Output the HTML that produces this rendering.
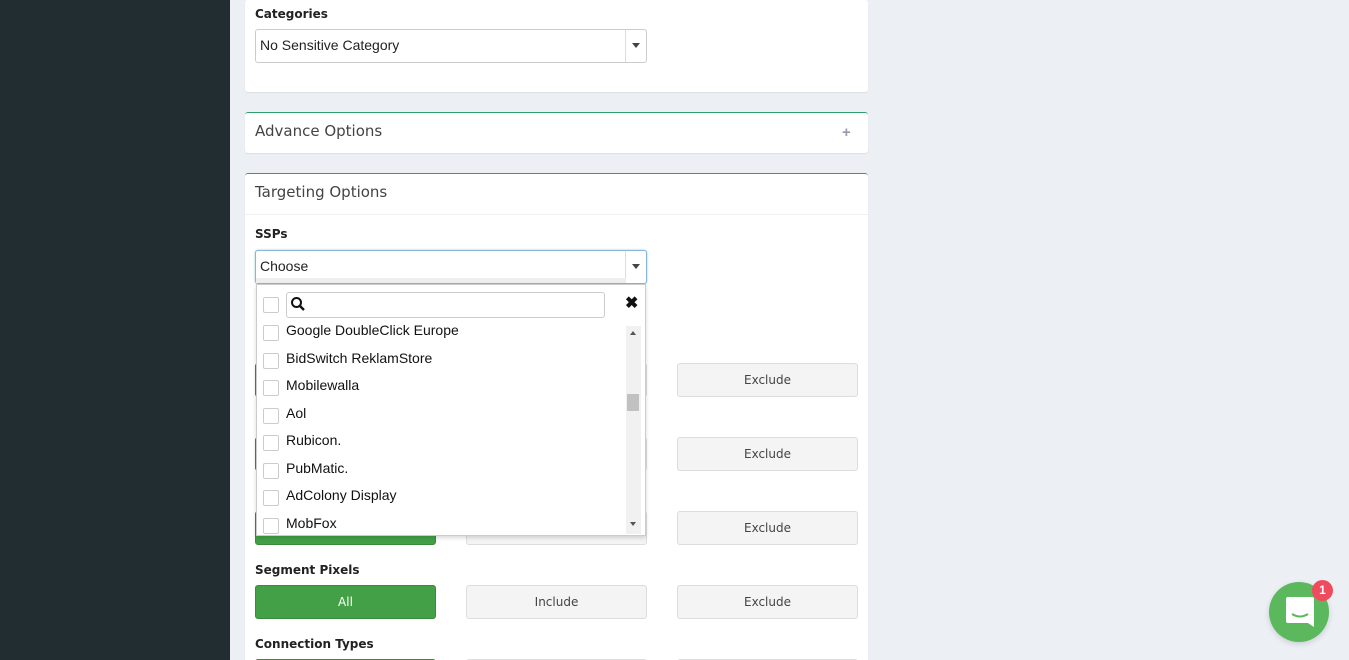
<!DOCTYPE html>
<html style="width:1349px;height:660px;overflow:hidden"><head><meta charset="utf-8"><style>
*{box-sizing:border-box;margin:0;padding:0}
body{width:1349px;height:660px;overflow:hidden;background:#ecf0f5;font-family:"Liberation Sans",sans-serif;position:relative}
.wrap{position:absolute;left:0;top:0;width:1349px;height:660px;overflow:hidden}
.a{position:absolute}
.side{left:0;top:0;width:230px;height:660px;background:#222d32}
.card{background:#fff;left:245px;width:623px;border-radius:3px;box-shadow:0 1px 1px rgba(0,0,0,.08)}
.lbl{font-family:"DejaVu Sans",sans-serif;font-weight:bold;font-size:12px;color:#222;left:255px}
.sel{left:255px;width:392px;height:34px;border:1px solid #ccc;border-radius:3px;background:#fff;font-size:14px;color:#222;padding:7px 0 0 4px}
.sel .arr{position:absolute;right:0;top:0;width:21px;height:32px;border-left:1px solid #ddd}
.sel .arr:after{content:"";position:absolute;left:6px;top:13px;border-left:4px solid transparent;border-right:4px solid transparent;border-top:5px solid #444}
.title{font-family:"DejaVu Sans",sans-serif;font-size:15px;color:#444;left:255px}
.btn{width:181px;height:34px;border:1px solid #ddd;border-radius:3px;background:#f4f4f4;font-family:"DejaVu Sans",sans-serif;font-size:12px;color:#444;text-align:center;line-height:32px}
.g{background:#43a047;border-color:#3a8a3e;color:#fff}
.cb{width:16px;height:16px;border:1px solid #ccc;border-radius:2px;background:#fff;left:263px}
.it{left:286px;font-size:14px;color:#111}
</style></head><body><div class="wrap">
<div class="a side"></div>
<div class="a card" style="top:0;height:92px"></div>
<div class="a lbl" style="top:7px">Categories</div>
<div class="a sel" style="top:29px">No Sensitive Category<div class="arr"></div></div>
<div class="a card" style="top:112px;height:41px;border-top:1px solid #2e9e6a"></div>
<div class="a title" style="top:122px">Advance Options</div>
<div class="a" style="left:842px;top:124px;font-size:15px;font-weight:bold;color:#99a">+</div>
<div class="a card" style="top:173px;height:500px;border-top:1px solid #2e9e6a"></div>
<div class="a" style="left:245px;top:214px;width:623px;height:1px;background:#f0f0f0"></div>
<div class="a title" style="top:183px">Targeting Options</div>
<div class="a lbl" style="top:227px">SSPs</div>

<div class="a btn g" style="left:255px;top:363px">All</div><div class="a btn" style="left:466px;top:363px">Include</div><div class="a btn" style="left:677px;top:363px">Exclude</div>
<div class="a btn g" style="left:255px;top:437px">All</div><div class="a btn" style="left:466px;top:437px">Include</div><div class="a btn" style="left:677px;top:437px">Exclude</div>
<div class="a btn g" style="left:255px;top:511px">All</div><div class="a btn" style="left:466px;top:511px">Include</div><div class="a btn" style="left:677px;top:511px">Exclude</div>
<div class="a lbl" style="top:563px">Segment Pixels</div>
<div class="a btn g" style="left:255px;top:585px">All</div><div class="a btn" style="left:466px;top:585px">Include</div><div class="a btn" style="left:677px;top:585px">Exclude</div>
<div class="a lbl" style="top:637px">Connection Types</div>
<div class="a btn g" style="left:255px;top:659px"></div><div class="a btn" style="left:466px;top:659px"></div><div class="a btn" style="left:677px;top:659px"></div>

<div class="a sel" style="top:250px;border-color:#8ab4d8;box-shadow:0 0 2px #9cc">Choose<div class="arr"></div></div>
<div class="a" style="left:256px;top:278px;width:370px;height:5px;background:#eee"></div>
<div class="a" style="left:256px;top:284px;width:390px;height:252px;background:#fff;border:1px solid #ccc;box-shadow:0 2px 4px rgba(0,0,0,.15)"></div>
<div class="a cb" style="top:297px"></div>
<div class="a" style="left:286px;top:292px;width:319px;height:26px;border:1px solid #ccc;border-radius:3px;background:#fff"></div>
<svg class="a" style="left:290px;top:296px" width="16" height="16" viewBox="0 0 16 16"><circle cx="6.5" cy="6.5" r="4.5" fill="none" stroke="#111" stroke-width="2"/><path d="M10 10l4 4" stroke="#111" stroke-width="2.4"/></svg>
<div class="a" style="left:625px;top:293px;font-size:16px;font-weight:bold;color:#111">✖</div>
<div class="a" style="left:626px;top:326px;width:15px;height:208px;background:#f1f1f1"></div>
<div class="a" style="left:627px;top:394px;width:12px;height:17px;background:#c1c1c1"></div>
<div class="a" style="left:630px;top:331px;border-left:3px solid transparent;border-right:3px solid transparent;border-bottom:4px solid #555"></div>
<div class="a" style="left:630px;top:522px;border-left:3px solid transparent;border-right:3px solid transparent;border-top:4px solid #555"></div>

<div class="a cb" style="top:325px"></div><div class="a it" style="top:322px">Google DoubleClick Europe</div>
<div class="a cb" style="top:353px"></div><div class="a it" style="top:350px">BidSwitch ReklamStore</div>
<div class="a cb" style="top:380px"></div><div class="a it" style="top:377px">Mobilewalla</div>
<div class="a cb" style="top:408px"></div><div class="a it" style="top:405px">Aol</div>
<div class="a cb" style="top:435px"></div><div class="a it" style="top:432px">Rubicon.</div>
<div class="a cb" style="top:463px"></div><div class="a it" style="top:460px">PubMatic.</div>
<div class="a cb" style="top:490px"></div><div class="a it" style="top:487px">AdColony Display</div>
<div class="a" style="left:257px;top:517px;width:369px;height:18px;overflow:hidden"><div class="a cb" style="left:6px;top:1px"></div><div class="a it" style="left:29px;top:-2px">MobFox</div></div>

<div class="a" style="left:1269px;top:582px;width:60px;height:60px;border-radius:50%;background:#5cb85c;box-shadow:0 2px 6px rgba(0,0,0,.15)"></div>
<svg class="a" style="left:1286px;top:597px" width="28" height="32" viewBox="0 0 28 32"><path d="M2 0h24a2 2 0 0 1 2 2v28l-6-4H2a2 2 0 0 1-2-2V2a2 2 0 0 1 2-2z" fill="#fff"/><path d="M6 17q8 5 16 0" stroke="#5cb85c" stroke-width="2" fill="none"/></svg>
<div class="a" style="left:1312px;top:580px;width:21px;height:21px;border-radius:50%;background:#ef4b5f;color:#fff;font-size:12px;font-weight:bold;text-align:center;line-height:21px">1</div>
</div></body></html>
